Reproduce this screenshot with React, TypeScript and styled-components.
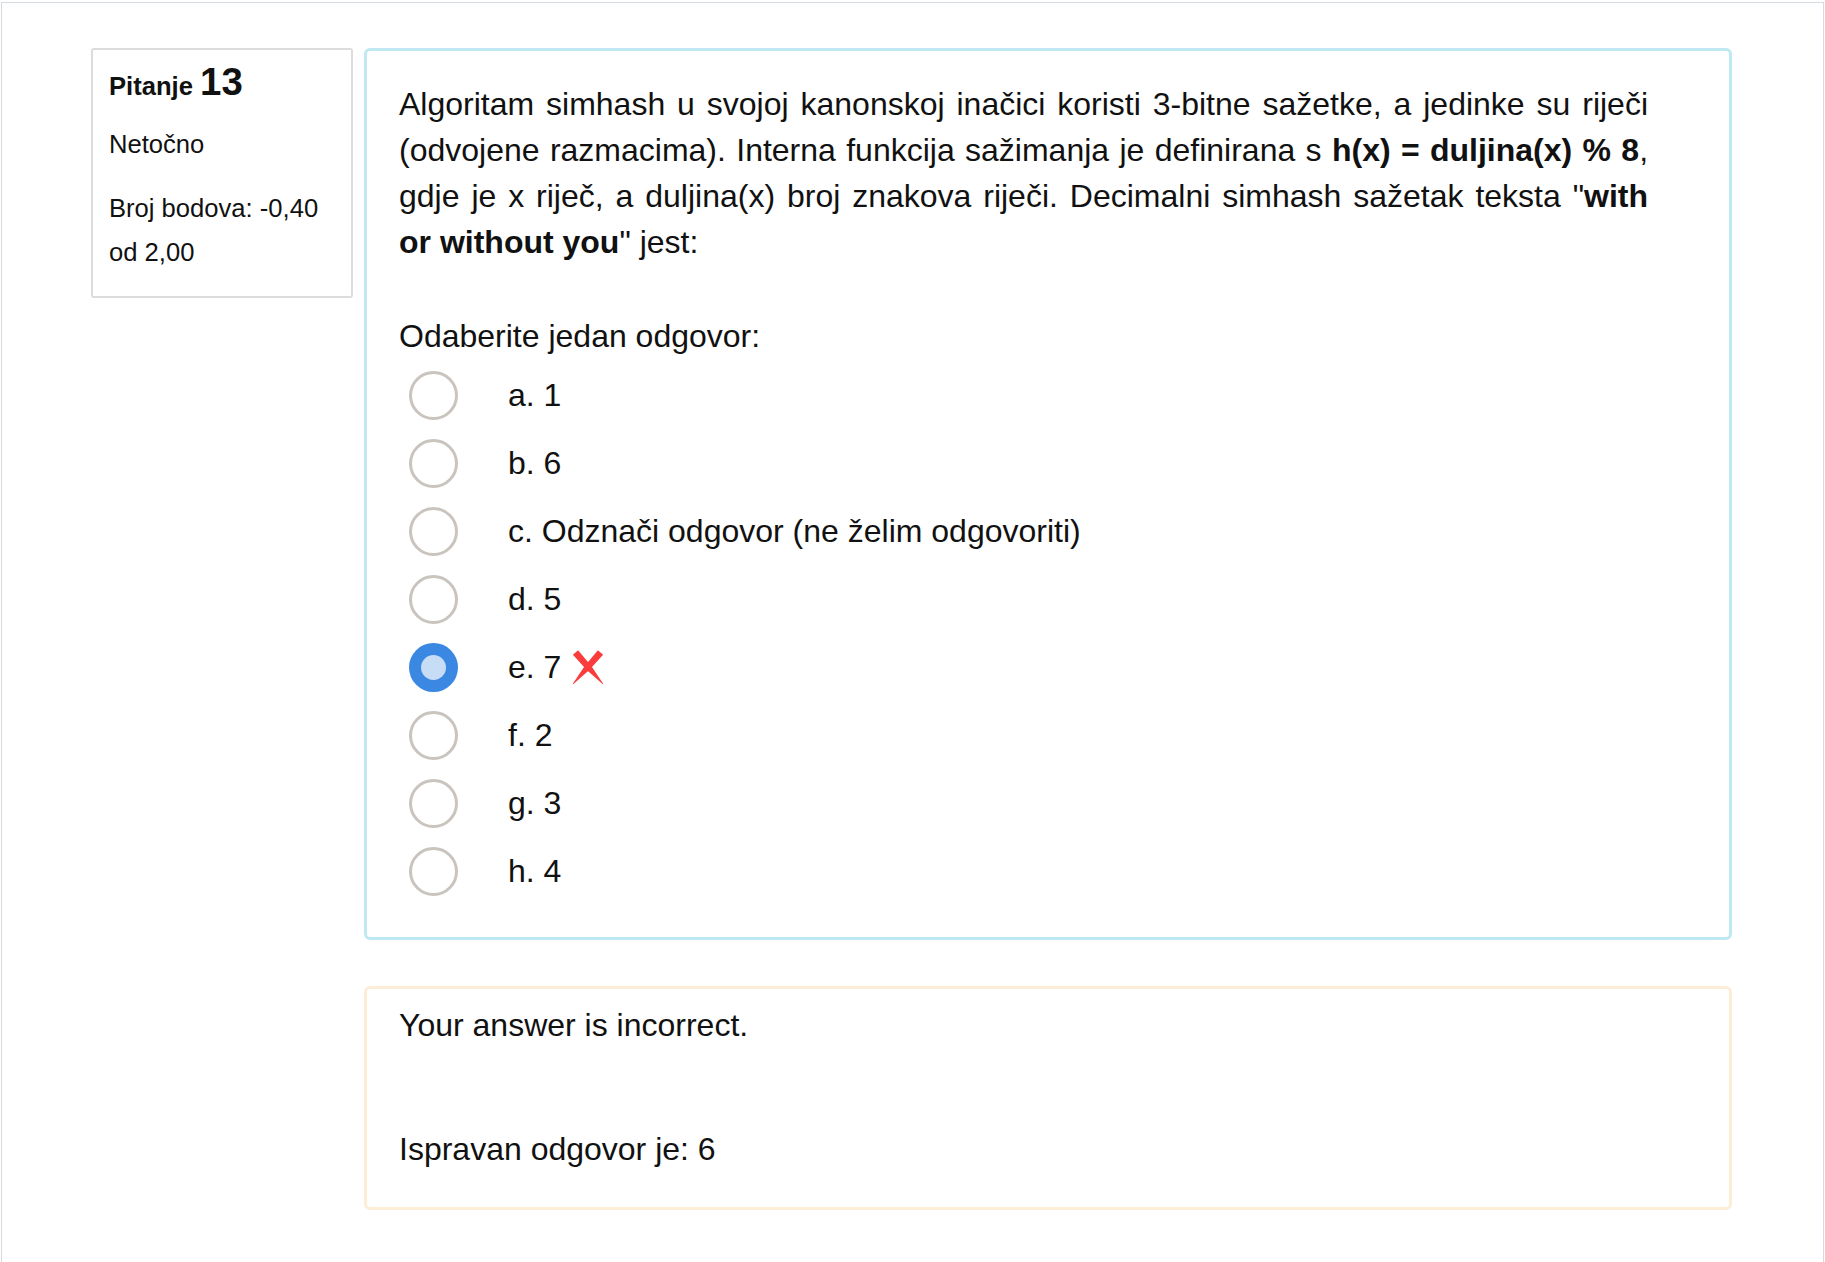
import React from "react";
import styled, { createGlobalStyle } from "styled-components";

const GlobalStyle = createGlobalStyle`
  html, body {
    margin: 0;
    padding: 0;
    background: #ffffff;
  }
  body {
    font-family: "Liberation Sans", Arial, Helvetica, sans-serif;
    color: #111111;
  }
  * { box-sizing: border-box; }
`;

const Page = styled.div`
  margin: 2px 1px 0 1px;
  min-height: 1260px;
  border: 1px solid #d4dae2;
  border-bottom: none;
  padding: 45px 0 0 89px;
`;

const Question = styled.div`
  display: flex;
  align-items: flex-start;
  gap: 11px;
`;

const Info = styled.div`
  width: 262px;
  flex: none;
  border: 2px solid #dcdcdc;
  border-radius: 3px;
  padding: 9px 16px 22px 16px;
  font-size: 25.6px;
`;

const Title = styled.h3`
  margin: 0;
  font-size: 25.6px;
  line-height: 1.2;
  font-weight: 700;
`;

const Number = styled.span`
  font-size: 1.5em;
`;

const State = styled.div`
  margin-top: 19px;
  line-height: 40px;
`;

const Grade = styled.div`
  margin-top: 22px;
  line-height: 44px;
`;

const Main = styled.div`
  width: 1368px;
  flex: none;
  display: flex;
  flex-direction: column;
  gap: 46px;
`;

const Panel = styled.div<{ $tone: "info" | "warn" }>`
  border: 3px solid ${(p) => (p.$tone === "info" ? "#bfe8f2" : "#fcedd6")};
  border-radius: 6px;
  font-size: 32px;
  line-height: 46px;
`;

const Formulation = styled(Panel)`
  padding: 30px 81px 32px 32px;
`;

const QText = styled.p`
  margin: 0;
  text-align: justify;
`;

const Prompt = styled.div`
  margin-top: 48px;
`;

const Answers = styled.div`
  margin-top: 2px;
  display: flex;
  flex-direction: column;
`;

const Row = styled.div`
  height: 68px;
  display: flex;
  align-items: center;
`;

const Radio = styled.span<{ $checked?: boolean }>`
  width: 49px;
  height: 49px;
  flex: none;
  margin-left: 10px;
  border-radius: 50%;
  display: flex;
  align-items: center;
  justify-content: center;
  border: ${(p) => (p.$checked ? "none" : "3px solid #c9c4bd")};
  background: ${(p) => (p.$checked ? "#3b88e3" : "#ffffff")};
`;

const Dot = styled.span`
  width: 25px;
  height: 25px;
  border-radius: 50%;
  background: #c7dcf5;
`;

const Label = styled.span`
  margin-left: 50px;
  display: flex;
  align-items: center;
  gap: 11px;
`;

const Feedback = styled(Panel)`
  height: 224px;
  padding: 13px 32px 36px 32px;
`;

const RightAnswer = styled.div`
  margin-top: 78px;
`;

const CrossIcon = () => (
  <svg width="32" height="36" viewBox="0 0 32 36" aria-hidden="true">
    <polygon
      fill="#fb3c3c"
      points="0.9,5.8 6.1,1.2 19.5,17.3 31.2,34.8 30.8,35.2 15,21.2"
    />
    <polygon
      fill="#fb3c3c"
      points="31.1,5.8 25.9,1.2 12.5,17.3 0.8,34.8 1.2,35.2 17,21.2"
    />
  </svg>
);

const options = [
  { key: "a", text: "1" },
  { key: "b", text: "6" },
  { key: "c", text: "Odznači odgovor (ne želim odgovoriti)" },
  { key: "d", text: "5" },
  { key: "e", text: "7", checked: true },
  { key: "f", text: "2" },
  { key: "g", text: "3" },
  { key: "h", text: "4" },
];

export default function App() {
  return (
    <>
      <GlobalStyle />
      <Page>
        <Question>
          <Info>
            <Title>
              Pitanje <Number>13</Number>
            </Title>
            <State>Netočno</State>
            <Grade>Broj bodova: -0,40 od 2,00</Grade>
          </Info>
          <Main>
            <Formulation $tone="info">
              <QText>
                Algoritam simhash u svojoj kanonskoj inačici koristi 3-bitne
                sažetke, a jedinke su riječi (odvojene razmacima). Interna
                funkcija sažimanja je definirana s{" "}
                <b>h(x) = duljina(x) % 8</b>, gdje je x riječ, a duljina(x)
                broj znakova riječi. Decimalni simhash sažetak teksta "
                <b>with or without you</b>" jest:
              </QText>
              <Prompt>Odaberite jedan odgovor:</Prompt>
              <Answers>
                {options.map((o) => (
                  <Row key={o.key}>
                    <Radio $checked={o.checked}>{o.checked && <Dot />}</Radio>
                    <Label>
                      {o.key}. {o.text}
                      {o.checked && <CrossIcon />}
                    </Label>
                  </Row>
                ))}
              </Answers>
            </Formulation>
            <Feedback $tone="warn">
              <div>Your answer is incorrect.</div>
              <RightAnswer>Ispravan odgovor je: 6</RightAnswer>
            </Feedback>
          </Main>
        </Question>
      </Page>
    </>
  );
}
